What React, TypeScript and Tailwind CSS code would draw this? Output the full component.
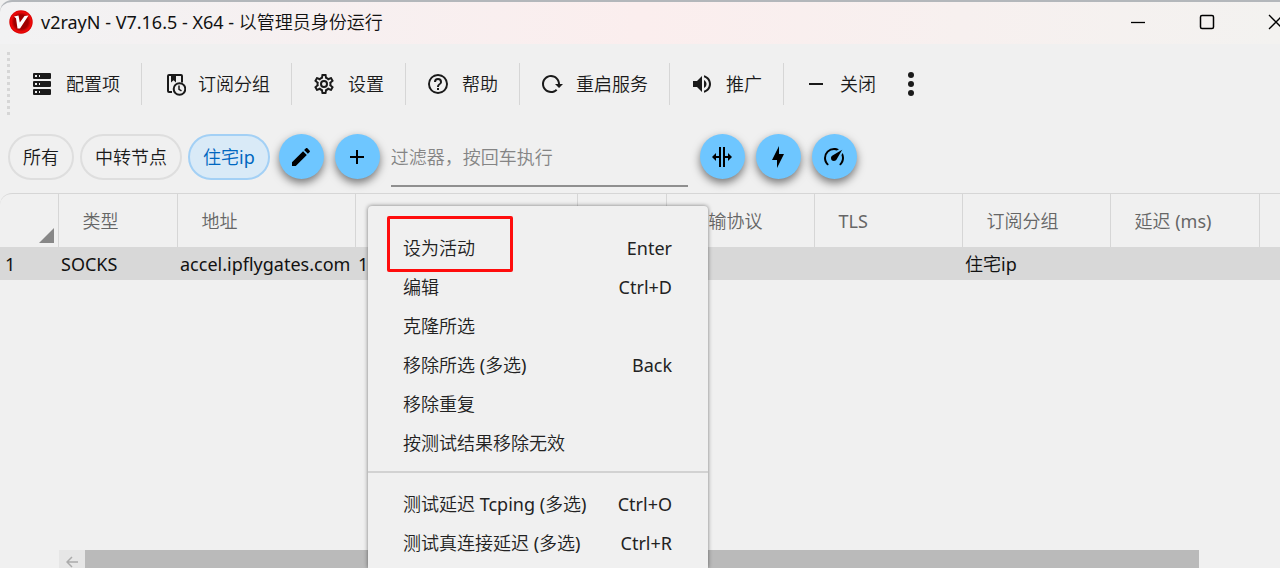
import React from 'react';

const PATHS = {
  server:
    'M4,1H20A1,1 0 0,1 21,2V6A1,1 0 0,1 20,7H4A1,1 0 0,1 3,6V2A1,1 0 0,1 4,1M4,9H20A1,1 0 0,1 21,10V14A1,1 0 0,1 20,15H4A1,1 0 0,1 3,14V10A1,1 0 0,1 4,9M4,17H20A1,1 0 0,1 21,18V22A1,1 0 0,1 20,23H4A1,1 0 0,1 3,22V18A1,1 0 0,1 4,17M9,5H10V3H9V5M9,13H10V11H9V13M9,21H10V19H9V21M5,3V5H7V3H5M5,11V13H7V11H5M5,19V21H7V19H5Z',
  cog:
    'M12,8A4,4 0 0,1 16,12A4,4 0 0,1 12,16A4,4 0 0,1 8,12A4,4 0 0,1 12,8M12,10A2,2 0 0,0 10,12A2,2 0 0,0 12,14A2,2 0 0,0 14,12A2,2 0 0,0 12,10M10,22C9.75,22 9.54,21.82 9.5,21.58L9.13,18.93C8.5,18.68 7.96,18.34 7.44,17.94L4.95,18.95C4.73,19.03 4.46,18.95 4.34,18.73L2.34,15.27C2.21,15.05 2.27,14.78 2.46,14.63L4.57,12.97L4.5,12L4.57,11L2.46,9.37C2.27,9.22 2.21,8.95 2.34,8.73L4.34,5.27C4.46,5.05 4.73,4.96 4.95,5.05L7.44,6.05C7.96,5.66 8.5,5.32 9.13,5.07L9.5,2.42C9.54,2.18 9.75,2 10,2H14C14.25,2 14.46,2.18 14.5,2.42L14.87,5.07C15.5,5.32 16.04,5.66 16.56,6.05L19.05,5.05C19.27,4.96 19.54,5.05 19.66,5.27L21.66,8.73C21.79,8.95 21.73,9.22 21.54,9.37L19.43,11L19.5,12L19.43,13L21.54,14.63C21.73,14.78 21.79,15.05 21.66,15.27L19.66,18.73C19.54,18.95 19.27,19.04 19.05,18.95L16.56,17.95C16.04,18.34 15.5,18.68 14.87,18.93L14.5,21.58C14.46,21.82 14.25,22 14,22H10M11.25,4L10.88,6.61C9.68,6.86 8.62,7.5 7.85,8.39L5.44,7.35L4.69,8.65L6.8,10.2C6.4,11.37 6.4,12.64 6.8,13.8L4.68,15.36L5.43,16.66L7.86,15.62C8.63,16.5 9.68,17.14 10.87,17.38L11.24,20H12.76L13.13,17.39C14.32,17.14 15.37,16.5 16.14,15.62L18.57,16.66L19.32,15.36L17.2,13.81C17.6,12.64 17.6,11.37 17.2,10.2L19.31,8.65L18.56,7.35L16.15,8.39C15.38,7.5 14.32,6.86 13.12,6.62L12.75,4H11.25Z',
  help:
    'M11,18H13V16H11V18M12,2A10,10 0 0,0 2,12A10,10 0 0,0 12,22A10,10 0 0,0 22,12A10,10 0 0,0 12,2M12,20C7.59,20 4,16.41 4,12C4,7.59 7.59,4 12,4C16.41,4 20,7.59 20,12C20,16.41 16.41,20 12,20M12,6A4,4 0 0,0 8,10H10A2,2 0 0,1 12,8A2,2 0 0,1 14,10C14,12 11,11.75 11,15H13C13,12.75 16,12.5 16,10A4,4 0 0,0 12,6Z',
  reload:
    'M2 12C2 16.97 6.03 21 11 21C13.39 21 15.68 20.06 17.4 18.4L15.9 16.9C14.63 18.25 12.86 19 11 19C4.76 19 1.64 11.46 6.05 7.05C10.46 2.64 18 5.77 18 12H15L19 16H19.1L23 12H20C20 7.03 15.97 3 11 3C6.03 3 2 7.03 2 12Z',
  volume:
    'M14,3.23V5.29C16.89,6.15 19,8.83 19,12C19,15.17 16.89,17.84 14,18.7V20.77C18,19.86 21,16.28 21,12C21,7.72 18,4.14 14,3.23M16.5,12C16.5,10.23 15.5,8.71 14,7.97V16C15.5,15.29 16.5,13.76 16.5,12M3,9V15H7L12,20V4L7,9H3Z',
  minus: 'M19,13H5V11H19V13Z',
  pencil:
    'M20.71,7.04C21.1,6.65 21.1,6 20.71,5.63L18.37,3.29C18,2.9 17.35,2.9 16.96,3.29L15.12,5.12L18.87,8.87M3,17.25V21H6.75L17.81,9.93L14.06,6.18L3,17.25Z',
  plus: 'M19,13H13V19H11V13H5V11H11V5H13V11H19V13Z',
  split:
    'M18,16V13H15V22H13V2H15V11H18V8L22,12L18,16M2,12L6,16V13H9V22H11V2H9V11H6V8L2,12Z',
  bolt: 'M11 15H6L13 1V9H18L11 23V15Z',
  speed:
    'M12,16A3,3 0 0,1 9,13C9,11.88 9.61,10.9 10.5,10.39L20.21,4.77L14.68,14.35C14.18,15.33 13.17,16 12,16M12,3C13.81,3 15.5,3.5 16.97,4.32L14.87,5.53C14,5.19 13,5 12,5A8,8 0 0,0 4,13C4,15.21 4.89,17.21 6.34,18.65H6.35C6.74,19.04 6.74,19.67 6.35,20.06C5.96,20.45 5.32,20.45 4.93,20.07V20.07C3.12,18.26 2,15.76 2,13A10,10 0 0,1 12,3M22,13C22,15.76 20.88,18.26 19.07,20.07V20.07C18.68,20.45 18.05,20.45 17.66,20.06C17.27,19.67 17.27,19.04 17.66,18.65V18.65C19.11,17.2 20,15.21 20,13C20,12 19.81,11 19.46,10.1L20.67,8C21.5,9.5 22,11.18 22,13Z',
};

type IconName = keyof typeof PATHS;

const Icon: React.FC<{ name: IconName }> = ({ name }) => (
  <svg viewBox="0 0 24 24" className="size-6 shrink-0" fill="currentColor" aria-hidden="true">
    <path d={PATHS[name]} />
  </svg>
);

const BookClock: React.FC = () => (
  <svg viewBox="0 0 24 24" className="size-6 shrink-0" fill="none" stroke="currentColor" strokeWidth="2" aria-hidden="true">
    <path d="M10 20H7A1 1 0 0 1 6 19V4A1 1 0 0 1 7 3H19A1 1 0 0 1 20 4V10.5" />
    <path d="M9 3H14V10.500L11.500 8.200L9 10.500Z" fill="currentColor" stroke="none" />
    <circle cx="17.500" cy="17" r="5.800" />
    <path d="M17 13.500V17.300L19.500 18.800" strokeWidth="1.500" />
  </svg>
);

const TOOLBAR: { label: string; icon: IconName | 'bookClock' }[] = [
  { label: '配置项', icon: 'server' },
  { label: '订阅分组', icon: 'bookClock' },
  { label: '设置', icon: 'cog' },
  { label: '帮助', icon: 'help' },
  { label: '重启服务', icon: 'reload' },
  { label: '推广', icon: 'volume' },
  { label: '关闭', icon: 'minus' },
];

const COLUMNS = ['类型', '地址', '端口', '', '传输协议', 'TLS', '订阅分组', '延迟 (ms)'];
const ROW = ['SOCKS', 'accel.ipflygates.com', '1', '', '', '', '住宅ip', ''];

const MENU_TOP = [
  { label: '设为活动', keys: 'Enter' },
  { label: '编辑', keys: 'Ctrl+D' },
  { label: '克隆所选' },
  { label: '移除所选 (多选)', keys: 'Back' },
  { label: '移除重复' },
  { label: '按测试结果移除无效' },
];

const MENU_TEST = [
  { label: '测试延迟 Tcping (多选)', keys: 'Ctrl+O' },
  { label: '测试真连接延迟 (多选)', keys: 'Ctrl+R' },
];

const TitleBar: React.FC = () => (
  <header className="flex h-11 items-center rounded-tl-xl border-t-2 border-[#b3b7bb] bg-linear-to-r from-[#f2f2f3] via-[#fbeeee] to-[#f3f2f0] pb-[2px] pl-[9px]">
    <svg viewBox="0 0 24 24" className="size-6" aria-hidden="true">
      <defs>
        <radialGradient id="logo-red">
          <stop offset="0.6" stopColor="#a00000" />
          <stop offset="0.85" stopColor="#f00a0a" />
          <stop offset="1" stopColor="#d80000" />
        </radialGradient>
      </defs>
      <circle cx="12" cy="12" r="11.700" fill="url(#logo-red)" />
      <path d="M5 6.500L9.500 5.500L10.800 12.500L15.500 6L19.500 5.500L11 18.500H8.500L7 8.200Z" fill="#fff" />
    </svg>
    <h1 className="ml-2 text-[18px] leading-6 text-[#111]">v2rayN - V7.16.5 - X64 - 以管理员身份运行</h1>
    {/* the close button runs past the window's right edge */}
    <div className="-mr-[30px] ml-auto flex self-stretch text-black">
      <button aria-label="最小化" className="flex w-[69px] items-center justify-center">
        <svg viewBox="0 0 16 16" className="size-4" stroke="currentColor" strokeWidth="1.3">
          <path d="M1 8.500H15" />
        </svg>
      </button>
      <button aria-label="最大化" className="flex w-[69px] items-center justify-center">
        <svg viewBox="0 0 16 16" className="size-4" fill="none" stroke="currentColor" strokeWidth="1.500">
          <rect x="1.500" y="1.500" width="13" height="13" rx="1.500" />
        </svg>
      </button>
      <button aria-label="关闭窗口" className="flex w-[69px] items-center justify-center">
        <svg viewBox="0 0 16 16" className="size-4" stroke="currentColor" strokeWidth="1.3">
          <path d="M1 1L15 15M15 1L1 15" />
        </svg>
      </button>
    </div>
  </header>
);

const Toolbar: React.FC = () => (
  <nav className="flex h-[79px] items-center pl-[7px]">
    <div className="h-[63px] w-[3px] bg-[repeating-linear-gradient(#d6d6d6_0_3px,transparent_3px_6px)]" />
    {TOOLBAR.map((item) => (
      <div key={item.label} className="flex h-[42px] items-center border-r border-[#d6d6d6] nth-[8]:border-r-0">
        <button className="flex items-center gap-3 pr-[21px] pl-5 leading-6">
          {item.icon === 'bookClock' ? <BookClock /> : <Icon name={item.icon} />}
          {item.label}
        </button>
      </div>
    ))}
    <button aria-label="更多" className="-ml-1">
      <svg viewBox="0 0 24 24" className="size-9" fill="currentColor">
        <circle cx="12" cy="6" r="2" />
        <circle cx="12" cy="12" r="2" />
        <circle cx="12" cy="18" r="2" />
      </svg>
    </button>
  </nav>
);

const Fab: React.FC<{ icon: IconName; label: string }> = ({ icon, label }) => (
  <button
    aria-label={label}
    className="flex size-[45px] shrink-0 items-center justify-center rounded-full bg-[#6ec6ff] text-black shadow-[0_4px_9px_rgba(0,0,0,0.5)]"
  >
    <Icon name={icon} />
  </button>
);

const FilterBar: React.FC = () => (
  <div className="flex h-[70px] items-start pt-[11px] pl-2">
    <div className="flex gap-[6px]">
      <button className="h-[46px] rounded-full border-2 border-[#dedede] px-[13px]">所有</button>
      <button className="h-[46px] rounded-full border-2 border-[#dedede] px-[13px]">中转节点</button>
      <button className="h-[46px] rounded-full border-2 border-[#a3d0f5] bg-[#d9eaf7] px-[13px] text-[#0067c0]">住宅ip</button>
    </div>
    <div className="ml-[9px] flex gap-[11px]">
      <Fab icon="pencil" label="编辑分组" />
      <Fab icon="plus" label="添加分组" />
    </div>
    <input
      type="text"
      aria-label="过滤器"
      placeholder="过滤器，按回车执行"
      className="ml-[11px] h-[53px] w-[297px] border-b-2 border-[#8f8f8f] pb-[6px] outline-none placeholder:text-[#858585]"
    />
    <div className="ml-[12px] flex gap-[11px]">
      <Fab icon="split" label="自动列宽" />
      <Fab icon="bolt" label="测试真连接延迟" />
      <Fab icon="speed" label="测速" />
    </div>
  </div>
);

const ServerTable: React.FC = () => (
  <div className="rounded-tl-xl border-t border-[#d6d6d6]">
    <table className="w-full table-fixed border-collapse whitespace-nowrap">
      <colgroup>
        <col className="w-[58px]" />
        <col className="w-[119px]" />
        <col className="w-[178px]" />
        <col className="w-[222px]" />
        <col className="w-[89px]" />
        <col className="w-[148px]" />
        <col className="w-[148px]" />
        <col className="w-[148px]" />
        <col className="w-[149px]" />
        <col />
      </colgroup>
      <thead>
        <tr className="h-[53px] text-left text-[#666]">
          <th className="border-r border-[#d6d6d6] p-0 pr-1 pb-1 align-bottom">
            <svg viewBox="0 0 15 15" className="ml-auto size-[15px]" fill="#878787" aria-hidden="true">
              <path d="M15 0V15H0Z" />
            </svg>
          </th>
          {COLUMNS.map((title, i) => (
            <th key={i} className="border-r border-[#d6d6d6] p-0 pl-6 font-normal">
              {title}
            </th>
          ))}
          <th />
        </tr>
      </thead>
      <tbody>
        <tr className="h-[33px] bg-[#d8d8d8] text-[#111]">
          <td className="p-0 pl-[5px]">1</td>
          {ROW.map((cell, i) => (
            <td key={i} className="p-0 pl-[3px]">
              {cell}
            </td>
          ))}
          <td />
        </tr>
      </tbody>
    </table>
  </div>
);

const MenuItem: React.FC<{ label: string; keys?: string }> = ({ label, keys }) => (
  <button role="menuitem" className="flex h-[39px] w-full items-center justify-between pr-9 pl-[35px] whitespace-nowrap">
    <span>{label}</span>
    {keys && <span>{keys}</span>}
  </button>
);

const ContextMenu: React.FC = () => (
  <div
    role="menu"
    className="absolute top-[206px] bottom-0 left-[368px] w-[340px] overflow-hidden rounded-t bg-[#f0f0f0] pt-[22px] text-[#222] shadow-[0_0_4px_rgba(0,0,0,0.5)]"
  >
    {MENU_TOP.map((item) => (
      <MenuItem key={item.label} {...item} />
    ))}
    <hr className="mt-[9px] mb-[11px] border-t-2 border-[#d2d2d2]" />
    {MENU_TEST.map((item) => (
      <MenuItem key={item.label} {...item} />
    ))}
    {/* Highlight */}
    <div className="pointer-events-none absolute top-[10px] left-[19px] h-14 w-[126px] rounded-xs border-3 border-[#ff0d0d]" />
  </div>
);

export default function App() {
  return (
    <div
      lang="zh-CN"
      className="relative flex min-h-screen flex-col overflow-hidden bg-[#f0f0f0] font-['Noto_Sans','Noto_Sans_CJK_SC_DemiLight','Noto_Sans_CJK_SC',sans-serif] text-[18px] leading-6 text-[#1a1a1a]"
    >
      <TitleBar />
      <Toolbar />
      <FilterBar />
      <ServerTable />

      {/* Horizontal scrollbar */}
      <div className="mt-auto mr-[81px] ml-[59px] flex h-[18px]">
        <button aria-label="向左滚动" className="flex w-[26px] items-end justify-center bg-[#e6e6e6] text-[#ababab]">
          <svg viewBox="0 0 12 12" className="size-3" fill="none" stroke="currentColor" strokeWidth="1.500">
            <path d="M12 6H1M6 1L1 6L6 11" />
          </svg>
        </button>
        <div className="flex-1 bg-[#bababa]" />
      </div>

      <ContextMenu />
    </div>
  );
}
